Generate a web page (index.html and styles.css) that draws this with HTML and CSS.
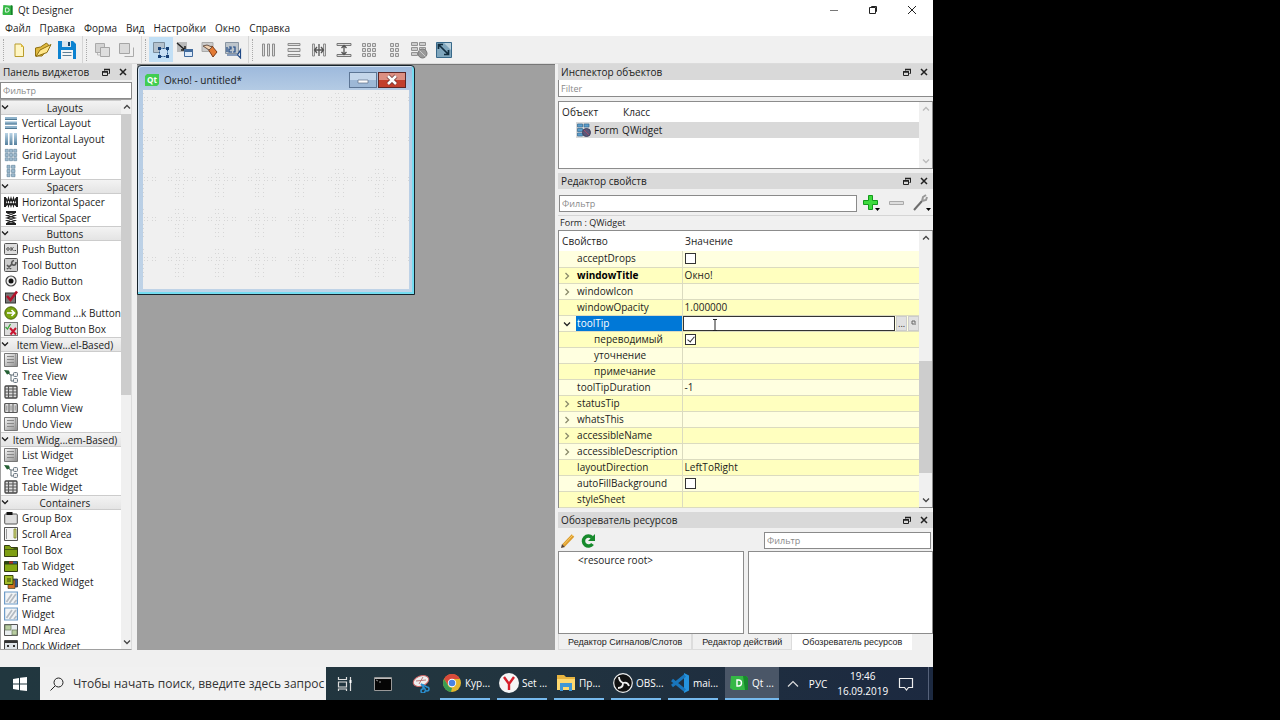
FILE: index.html
```html
<!DOCTYPE html>
<html lang="ru">
<head>
  <meta charset="UTF-8">
  <meta name="viewport" content="width=device-width, initial-scale=1.0">
  <title>Qt Designer</title>
  <link rel="stylesheet" href="styles.css">
</head>
<body>
  <svg class="sprite" aria-hidden="true">
    <defs>
      <linearGradient id="steel" x1="0" y1="0" x2="0" y2="1"><stop offset="0" stop-color="#b9d4e6"/><stop offset="1" stop-color="#55809d"/></linearGradient>
      <linearGradient id="grey" x1="0" y1="0" x2="1" y2="1"><stop offset="0" stop-color="#fafafa"/><stop offset="1" stop-color="#8c8c8c"/></linearGradient>
    </defs>
    <symbol id="i-vlayout" viewBox="0 0 14 14"><path fill="#8fb3cb" d="M1 1h12v3H1zM1 5.500h12v3H1zM1 10h12v3H1z"/><path fill="#4f7893" d="M1 3h12v1H1zM1 7.500h12v1H1zM1 12h12v1H1z"/></symbol>
    <symbol id="i-hlayout" viewBox="0 0 14 14"><path fill="url(#steel)" d="M1 1h3v12H1zM5.500 1h3v12h-3zM10 1h3v12h-3z"/></symbol>
    <symbol id="i-grid" viewBox="0 0 14 14"><path fill="#9dbace" stroke="#5c8099" stroke-width=".6" d="M1.300 1.300h3v3h-3zM5.500 1.300h3v3h-3zM9.700 1.300h3v3h-3zM1.300 5.500h3v3h-3zM5.500 5.500h3v3h-3zM9.700 5.500h3v3h-3zM1.300 9.700h3v3h-3zM5.500 9.700h3v3h-3zM9.700 9.700h3v3h-3z"/></symbol>
    <symbol id="i-form" viewBox="0 0 14 14"><path fill="#9dbace" stroke="#5c8099" stroke-width=".6" d="M3 1.300h3v3H3zM7.500 1.300h3.500v3H7.500zM3 5.500h3v3H3zM7.500 5.500h3.500v3H7.500zM3 9.700h3v3H3zM7.500 9.700h3.500v3H7.500z"/></symbol>
    <symbol id="i-hspacer" viewBox="0 0 14 14"><path fill="#222" d="M0 2h2v10H0zM12 2h2v10h-2z"/><path fill="none" stroke="#222" stroke-width="1.200" d="M2 3l2.500 8L7 3l2.500 8L12 3M2 11l2.500-8L7 11l2.500-8L12 11"/></symbol>
    <symbol id="i-vspacer" viewBox="0 0 14 14"><path fill="#222" d="M2 0h10v2H2zM2 12h10v2H2z"/><path fill="none" stroke="#222" stroke-width="1.200" d="M3 2l8 2.500L3 7l8 2.500L3 12M11 2L3 4.500 11 7 3 9.500 11 12"/></symbol>
    <symbol id="i-push" viewBox="0 0 14 14"><rect x=".5" y="1.500" width="13" height="11" rx="1" fill="#ddd" stroke="#555"/><circle cx="4" cy="7" r="1.300" fill="none" stroke="#333" stroke-width=".8"/><path fill="none" stroke="#333" stroke-width=".9" d="M7 5v4M9.500 5.500l-2 1.500 2 1.500M10.500 8.500h1.500"/></symbol>
    <symbol id="i-tool" viewBox="0 0 14 14"><rect x=".5" y=".5" width="13" height="13" rx="1" fill="#ccc" stroke="#555"/><path fill="none" stroke="#555" stroke-width="1.700" d="M3 11l5-5M10 2.500C7 3 7 6.500 9 7s3-.5 3-3M3 7l4 4"/></symbol>
    <symbol id="i-radio" viewBox="0 0 14 14"><circle cx="7" cy="7" r="5" fill="#eee" stroke="#444" stroke-width="1.200"/><circle cx="7" cy="7" r="2.500" fill="#111"/></symbol>
    <symbol id="i-check" viewBox="0 0 14 14"><rect x="1.500" y="3" width="10" height="10" fill="#777" stroke="#333"/><path fill="none" stroke="#b3122a" stroke-width="2.600" d="M3 6l3.500 4L13 1.500"/></symbol>
    <symbol id="i-command" viewBox="0 0 14 14"><circle cx="7" cy="7" r="6.200" fill="#7aa40f" stroke="#49650a"/><path fill="none" stroke="#fff" stroke-width="1.600" d="M3 7h7M7.500 4l3 3-3 3"/></symbol>
    <symbol id="i-dialog" viewBox="0 0 14 14"><rect x=".5" y=".5" width="13" height="13" fill="#ddd" stroke="#777"/><path fill="none" stroke="#38a53a" stroke-width="1.300" d="M1.500 5l2 2 3-5"/><path stroke="#c81530" stroke-width="2" d="M6 6l6 6.500M12 6l-5.500 6.500"/></symbol>
    <symbol id="i-list" viewBox="0 0 14 14"><path fill="url(#grey)" stroke="#777" d="M.5 .5h13v13H.5z"/><path stroke="#888" d="M3 3.500h7M3 6.500h7M3 9.500h7"/><path stroke="#999" d="M11.500 1v12"/></symbol>
    <symbol id="i-tree" viewBox="0 0 14 14"><path fill="#245f33" d="M0 1l5 .5 1 3-3 1z"/><path fill="none" stroke="#5d6b72" d="M5 5l2 1v6h2M7 6h2"/><rect x="9.500" y="3.500" width="4" height="4" rx="1" fill="#eee" stroke="#6a7884"/><rect x="9.500" y="9.500" width="4" height="4" rx="1" fill="#eee" stroke="#6a7884"/></symbol>
    <symbol id="i-table" viewBox="0 0 14 14"><rect x="1" y="1" width="12" height="12" rx="1" fill="#ddd" stroke="#444" stroke-width="1.300"/><path stroke="#555" stroke-width="1.100" d="M4.500 1v12M9 1v12M1 4h12M1 7h12M1 10h12"/></symbol>
    <symbol id="i-column" viewBox="0 0 14 14"><rect x=".7" y="2.500" width="12.600" height="9" rx="1" fill="#ddd" stroke="#555" stroke-width="1.200"/><path stroke="#555" d="M5 3v8M9 3v8"/><path stroke="#777" stroke-width=".8" d="M2.800 4.500v5M7 4.500v5M11.200 4.500v5"/></symbol>
    <symbol id="i-group" viewBox="0 0 14 14"><rect x=".7" y="3" width="12.600" height="10" rx="1" fill="#dedede" stroke="#555"/><path fill="#111" d="M2.500 1h6v3h-6z"/></symbol>
    <symbol id="i-scroll" viewBox="0 0 14 14"><path fill="#f3f3f3" stroke="#555" d="M.5 .5h13v13H.5z"/><path fill="#999" d="M2 2h1v10H2z"/><path fill="#d5d98c" stroke="#73801c" stroke-width=".8" d="M10 2h2v9h-2z"/></symbol>
    <symbol id="i-toolbox" viewBox="0 0 14 14"><path fill="#7e9e13" stroke="#333d12" d="M.5 2.500h5l1.500 2h6.500v9H.5z"/><path fill="#445a12" d="M1 6h8l1-1h3v2H1z"/></symbol>
    <symbol id="i-tab" viewBox="0 0 14 14"><path fill="#86a815" stroke="#303a0d" d="M.5 2.500h13v10H.5z"/><path fill="#2d4517" d="M1 2h12v3.500H1z"/><path fill="#b92c26" d="M5 2.500h4v2H5z"/><path fill="#335fa0" d="M9 2.500h4v2H9z"/></symbol>
    <symbol id="i-stack" viewBox="0 0 14 14"><path fill="#35579f" stroke="#222" stroke-width=".7" d="M6 4h7.500v8H6z"/><path fill="#cf6c22" stroke="#442" stroke-width=".7" d="M4 5h7v8.500H4z"/><path fill="#a3bd29" stroke="#374608" d="M.5 .5h8.500v9H.5z"/><path stroke="#374608" d="M3 4h4M3 6h4"/></symbol>
    <symbol id="i-frame" viewBox="0 0 14 14"><path fill="#f2f4f6" stroke="#6d9bc8" stroke-width="1.200" d="M.6 1h12.800v12H.6z"/><path stroke="#b4bbc2" stroke-width="1.800" d="M2.500 11L8 3M5.500 12L12 3M10 12l2.500-3"/></symbol>
    <symbol id="i-mdi" viewBox="0 0 14 14"><path fill="#e9eef0" stroke="#555" d="M.5 1.500h13v11H.5z"/><path fill="#b8cda0" stroke="#718067" stroke-width=".8" d="M1 2h6v5H1zM8 7h5v5H8z"/></symbol>
    <symbol id="i-dock" viewBox="0 0 14 14"><path fill="#dfe4e8" stroke="#444" d="M.5 1.500h13v12H.5z"/><path fill="#333" d="M1 2h12v2H1zM3 6h2v2H3zM9 6h2v2H9z"/></symbol>
    <symbol id="i-chev" viewBox="0 0 8 8"><path fill="none" stroke="currentColor" stroke-width="1.300" d="M1 2.500l3 3 3-3"/></symbol>
    <symbol id="i-float" viewBox="0 0 8 8"><path fill="none" stroke="#222" d="M2.500 2.500v-1h5v4h-1M.5 3.500h5v4h-5z"/><path stroke="#222" stroke-width="1.500" d="M2 1.500h6M0 4h6"/></symbol>
    <symbol id="i-close" viewBox="0 0 8 8"><path stroke="#222" stroke-width="1.500" d="M1 1l6 6M7 1L1 7"/></symbol>
  </svg>

  <div class="desktop">
    <header class="titlebar">
      <svg class="app-icon" viewBox="0 0 12 12"><path fill="#35b845" d="M1 0l11 1v11H1L0 11z"/><path fill="#16802a" d="M10 0l2 1v11h-2z"/><path fill="none" stroke="#fff" d="M3.500 3.500h2a2.500 2.500 0 010 5h-2z"/></svg>
      <span>Qt Designer</span>
      <div class="window-buttons">
        <button aria-label="Свернуть"><svg viewBox="0 0 10 10"><path stroke="#777" d="M1 5.500h8"/></svg></button>
        <button aria-label="Развернуть"><svg viewBox="0 0 10 10"><path fill="none" stroke="#222" d="M3.500 2.500v-1h5v5h-1M1.500 2.500h6v6h-6z"/></svg></button>
        <button aria-label="Закрыть"><svg viewBox="0 0 10 10"><path stroke="#222" d="M1 1l8 8M9 1L1 9"/></svg></button>
      </div>
    </header>

    <nav class="menubar">
      <a href="#">Файл</a><a href="#">Правка</a><a href="#">Форма</a><a href="#">Вид</a><a href="#">Настройки</a><a href="#">Окно</a><a href="#">Справка</a>
    </nav>

    <div class="toolbar">
      <div class="tool-group">
        <button aria-label="Новая"><svg viewBox="0 0 18 18"><path fill="#fff6c4" stroke="#b99c2c" d="M5 3h6l2.500 3v9.500H5z"/><path fill="#e1bf43" d="M11 3v3h3z"/></svg></button>
        <button aria-label="Открыть"><svg viewBox="0 0 18 18"><path fill="#e0b93f" stroke="#8f7011" d="M1.500 15V7l5-1 6-4 2 2v3L8 15z"/><path fill="#ffe68b" stroke="#8f7011" d="M2 15.500L6 9l11-5.500-4 8z"/></svg></button>
        <button aria-label="Сохранить"><svg viewBox="0 0 18 18"><path fill="#0d83d1" d="M0 0h15l3 3v15H0z"/><path fill="#d8e5ee" d="M4 0h9v6H4z"/><path fill="#1a4568" d="M10 1h2v4h-2z"/><path fill="#f5f5f5" d="M3 9h12v9H3z"/><path stroke="#5f7f95" d="M4.500 11.500h9M4.500 14.500h9"/></svg></button>
      </div>
      <div class="tool-group">
        <button aria-label="На задний план"><svg viewBox="0 0 18 18"><path fill="#d3d3d3" stroke="#aaa" d="M2.500 2.500h9v9h-9z"/><path fill="#dedede" stroke="#a5a5a5" d="M7.500 6.500h9v9h-9z"/><path fill="none" stroke="#bbb" d="M4.500 12v2h3"/></svg></button>
        <button aria-label="На передний план"><svg viewBox="0 0 18 18"><path fill="none" stroke="#aaa" d="M7.500 15.500h9v-9"/><path fill="#dadada" stroke="#a5a5a5" d="M2.500 2.500h10v10h-10z"/></svg></button>
      </div>
      <div class="tool-group">
        <button class="active" aria-label="Изменение виджетов"><svg viewBox="0 0 18 18"><path fill="#b5c2cd" stroke="#7b8c9a" d="M1.500 1.500h11v10h-11z"/><path fill="#c7dff4" stroke="#24548b" stroke-dasharray="2 1" d="M7.500 7.500h8v8h-8z"/><path fill="#173f75" d="M6 6h3v3H6zM14 6h3v3h-3zM6 14h3v3H6zM14 14h3v3h-3z"/></svg></button>
        <button aria-label="Сигналы и слоты"><svg viewBox="0 0 18 18"><path fill="#bbb" d="M1 1h10v10H1z"/><path fill="none" stroke="#222" stroke-width="1.500" d="M1 2l8 7M9 5v4H5"/><path fill="#dceafa" stroke="#426b9d" d="M8.500 8.500h8v7h-8z"/><path fill="#426b9d" d="M8 8h9v3H8z"/></svg></button>
        <button aria-label="Партнёры"><svg viewBox="0 0 18 18"><path fill="#ccc" stroke="#aaa" d="M2 1.500h11v9H2z"/><path fill="#e37b35" stroke="#7d3b18" d="M8 8l4-3 5 6-4 5z"/><path fill="#f0d0b0" stroke="#6b5548" d="M3 5l4-1 5 2-3 3z"/></svg></button>
        <button aria-label="Порядок обхода"><svg viewBox="0 0 18 18"><path fill="#bdc5cc" stroke="#8995a2" d="M1.500 1.500h13v11h-13z"/><path fill="none" stroke="#214a87" stroke-width="1.200" d="M3 6v5M5 6h2v2H5v3h3M9 6h2v5H9M13 14H3M16.500 9v8l-3-3z"/></svg></button>
      </div>
      <div class="tool-group layouts">
        <button aria-label="По горизонтали"><svg viewBox="0 0 18 18"><path fill="#ddd" stroke="#8c8c8c" d="M2.500 3v12h2V3zM7.500 3v12h2V3zM12.500 3v12h2V3z"/></svg></button>
        <button aria-label="По вертикали"><svg viewBox="0 0 18 18"><path fill="#ddd" stroke="#8c8c8c" d="M3 2.500h12v2H3zM3 7.500h12v3H3zM3 13.500h12v2H3z"/></svg></button>
        <button aria-label="Разделитель по горизонтали"><svg viewBox="0 0 18 18"><path fill="#ddd" stroke="#8c8c8c" d="M2.500 3v12h2V3zM13.500 3v12h2V3z"/><path fill="none" stroke="#555" stroke-width="1.300" d="M9 3v12M4 9h10M7 6L4.500 9 7 12M11 6l2.500 3-2.500 3"/></svg></button>
        <button aria-label="Разделитель по вертикали"><svg viewBox="0 0 18 18"><path fill="#ddd" stroke="#777" d="M2 2.500h14v2H2zM2 13.500h14v2H2z"/><path fill="none" stroke="#555" stroke-width="1.300" d="M9 5v8M6.500 7L9 4.500 11.500 7M6.500 11L9 13.500l2.500-2.500"/></svg></button>
        <button aria-label="По сетке"><svg viewBox="0 0 18 18"><path fill="#ddd" stroke="#929292" d="M2.500 2.500h3v3h-3zM7.500 2.500h3v3h-3zM12.500 2.500h3v3h-3zM2.500 7.500h3v3h-3zM7.500 7.500h3v3h-3zM12.500 7.500h3v3h-3zM2.500 12.500h3v3h-3zM7.500 12.500h3v3h-3zM12.500 12.500h3v3h-3z"/></svg></button>
        <button aria-label="По форме"><svg viewBox="0 0 18 18"><path fill="#ddd" stroke="#929292" d="M5.500 2.500h3v3h-3zM10.500 2.500h3v3h-3zM5.500 7.500h3v3h-3zM10.500 7.500h3v3h-3zM5.500 12.500h3v3h-3zM10.500 12.500h3v3h-3z"/></svg></button>
        <button aria-label="Убрать компоновку"><svg viewBox="0 0 18 18"><path fill="#ccc" stroke="#929292" d="M1.500 1.500h6v3h-6zM9.500 1.500h6v3h-6zM1.500 6.500h6v3h-6zM9.500 6.500h6v3h-6zM1.500 11.500h6v3h-6z"/><circle cx="12.500" cy="12.500" r="4.500" fill="#999" stroke="#777"/><path stroke="#ccc" d="M9.500 9.500l6 6"/></svg></button>
        <button aria-label="Подогнать размер"><svg viewBox="0 0 18 18"><path fill="#7fa6bd" stroke="#38698a" d="M1.500 1.500h15v15h-15z"/><path fill="#b9d0dc" d="M9 2h7v7z"/><path fill="none" stroke="#102c3e" stroke-width="1.700" d="M4 4l9 9M3.500 8V3.500H8M13.500 9v4.500H9"/></svg></button>
      </div>
    </div>

    <main class="workspace">
      <aside class="widget-box">
        <div class="dock-title">Панель виджетов<span class="dock-buttons"><button aria-label="Открепить"><svg><use href="#i-float"/></svg></button><button aria-label="Закрыть"><svg><use href="#i-close"/></svg></button></span></div>
        <input class="filter" type="text" placeholder="Фильтр" aria-label="Фильтр виджетов">
        <div class="widget-list">
          <div class="widget-items">
            <h3><svg><use href="#i-chev"/></svg>Layouts</h3>
            <ul>
              <li><svg><use href="#i-vlayout"/></svg>Vertical Layout</li>
              <li><svg><use href="#i-hlayout"/></svg>Horizontal Layout</li>
              <li><svg><use href="#i-grid"/></svg>Grid Layout</li>
              <li><svg><use href="#i-form"/></svg>Form Layout</li>
            </ul>
            <h3><svg><use href="#i-chev"/></svg>Spacers</h3>
            <ul>
              <li><svg><use href="#i-hspacer"/></svg>Horizontal Spacer</li>
              <li><svg><use href="#i-vspacer"/></svg>Vertical Spacer</li>
            </ul>
            <h3><svg><use href="#i-chev"/></svg>Buttons</h3>
            <ul>
              <li><svg><use href="#i-push"/></svg>Push Button</li>
              <li><svg><use href="#i-tool"/></svg>Tool Button</li>
              <li><svg><use href="#i-radio"/></svg>Radio Button</li>
              <li><svg><use href="#i-check"/></svg>Check Box</li>
              <li><svg><use href="#i-command"/></svg>Command ...k Button</li>
              <li><svg><use href="#i-dialog"/></svg>Dialog Button Box</li>
            </ul>
            <h3><svg><use href="#i-chev"/></svg>Item View...el-Based)</h3>
            <ul>
              <li><svg><use href="#i-list"/></svg>List View</li>
              <li><svg><use href="#i-tree"/></svg>Tree View</li>
              <li><svg><use href="#i-table"/></svg>Table View</li>
              <li><svg><use href="#i-column"/></svg>Column View</li>
              <li><svg><use href="#i-list"/></svg>Undo View</li>
            </ul>
            <h3><svg><use href="#i-chev"/></svg>Item Widg...em-Based)</h3>
            <ul>
              <li><svg><use href="#i-list"/></svg>List Widget</li>
              <li><svg><use href="#i-tree"/></svg>Tree Widget</li>
              <li><svg><use href="#i-table"/></svg>Table Widget</li>
            </ul>
            <h3><svg><use href="#i-chev"/></svg>Containers</h3>
            <ul>
              <li><svg><use href="#i-group"/></svg>Group Box</li>
              <li><svg><use href="#i-scroll"/></svg>Scroll Area</li>
              <li><svg><use href="#i-toolbox"/></svg>Tool Box</li>
              <li><svg><use href="#i-tab"/></svg>Tab Widget</li>
              <li><svg><use href="#i-stack"/></svg>Stacked Widget</li>
              <li><svg><use href="#i-frame"/></svg>Frame</li>
              <li><svg><use href="#i-frame"/></svg>Widget</li>
              <li><svg><use href="#i-mdi"/></svg>MDI Area</li>
              <li><svg><use href="#i-dock"/></svg>Dock Widget</li>
            </ul>
          </div>
          <div class="scrollbar thumb-top">
            <svg class="up"><use href="#i-chev"/></svg><div class="track"><div class="thumb"></div></div><svg><use href="#i-chev"/></svg>
          </div>
        </div>
      </aside>

      <section class="mdi">
        <div class="form-window">
          <div class="form-title">
            <svg class="qt-icon" viewBox="0 0 14 12"><path fill="#41cd52" d="M2 0h12v10l-2 2H0V2z"/><text x="7" y="9" text-anchor="middle" class="qt-text">Qt</text></svg>
            <span>Окно! - untitled*</span>
            <button class="form-min" aria-label="Свернуть форму"><svg viewBox="0 0 26 14"><path fill="#fff" stroke="#5d6f87" stroke-width=".7" d="M8 7h10v3H8z"/></svg></button>
            <button class="form-close" aria-label="Закрыть форму"><svg viewBox="0 0 26 14"><path stroke="#6b3030" stroke-width="4" d="M9 3l8 8M17 3l-8 8"/><path stroke="#fff" stroke-width="2.600" d="M9 3l8 8M17 3l-8 8"/></svg></button>
          </div>
          <div class="form-canvas">
            <svg width="100%" height="100%">
              <pattern id="dots" width="40" height="40" patternUnits="userSpaceOnUse" patternTransform="translate(17 -10)">
                <path stroke="#d6d6d6" stroke-dasharray="1 2 1 4" d="M8 17.500h28M8 20.500h28M15 9.500h11M15 13.500h11M15 24.500h11M15 28.500h11M15 32.500h11M15 36.500h11"/>
              </pattern>
              <rect width="100%" height="100%" fill="url(#dots)"/>
            </svg>
          </div>
        </div>
      </section>

      <aside class="docks">
        <section class="dock inspector">
          <div class="dock-title">Инспектор объектов<span class="dock-buttons"><button aria-label="Открепить"><svg><use href="#i-float"/></svg></button><button aria-label="Закрыть"><svg><use href="#i-close"/></svg></button></span></div>
          <input class="filter flat" type="text" placeholder="Filter" aria-label="Фильтр объектов">
          <div class="view">
            <table class="objects">
              <thead><tr><th>Объект</th><th>Класс</th></tr></thead>
              <tbody><tr><td><svg class="obj-icon" viewBox="0 0 14 14"><path fill="#5b9dcc" stroke="#33698f" stroke-width=".7" d="M.5 1h5v3h-5zM7 1h5v3H7zM.5 5.500h5v3h-5zM.5 10h5v3h-5z"/><circle cx="9.500" cy="9.500" r="4" fill="#5b5779" stroke="#40415f"/><path stroke="#a44a68" d="M7 7l5 5"/></svg>Form</td><td>QWidget</td></tr></tbody>
            </table>
            <div class="scrollbar disabled">
              <svg class="up"><use href="#i-chev"/></svg><div class="track"></div><svg><use href="#i-chev"/></svg>
            </div>
          </div>
        </section>

        <section class="dock properties">
          <div class="dock-title">Редактор свойств<span class="dock-buttons"><button aria-label="Открепить"><svg><use href="#i-float"/></svg></button><button aria-label="Закрыть"><svg><use href="#i-close"/></svg></button></span></div>
          <div class="prop-tools">
            <input class="filter" type="text" placeholder="Фильтр" aria-label="Фильтр свойств">
            <button aria-label="Добавить"><svg viewBox="0 0 20 18"><path fill="#3ddb3d" stroke="#129a1b" d="M6.500 1.500h4v5h5v4h-5v5h-4v-5h-5v-4h5z"/><path d="M13 14h5l-2.500 3z"/></svg></button>
            <button aria-label="Удалить"><svg viewBox="0 0 20 18"><path fill="#ddd" stroke="#aaa" d="M2.500 7.500h14v3h-14z"/></svg></button>
            <button aria-label="Настроить"><svg viewBox="0 0 20 18"><path stroke="#6d6d6d" stroke-width="2" d="M2 16l8-9"/><path fill="none" stroke="#999" stroke-width="2" d="M10 7l1-4 3-2M10 7l4-1 1-3"/><path d="M14 14h5l-2.500 3z"/></svg></button>
          </div>
          <div class="prop-path">Form : QWidget</div>
          <div class="view">
            <table class="props">
              <thead><tr><th>Свойство</th><th>Значение</th></tr></thead>
              <tbody>
                <tr><td><label for="accept-drops">acceptDrops</label></td><td><input type="checkbox" id="accept-drops"></td></tr>
                <tr><td class="changed"><svg class="closed"><use href="#i-chev"/></svg>windowTitle</td><td>Окно!</td></tr>
                <tr><td><svg class="closed"><use href="#i-chev"/></svg>windowIcon</td><td></td></tr>
                <tr><td>windowOpacity</td><td>1.000000</td></tr>
                <tr class="selected"><td><svg><use href="#i-chev"/></svg><label for="tooltip">toolTip</label></td><td><div class="editor"><input type="text" id="tooltip"><button>...</button><button aria-label="Сбросить"><svg viewBox="0 0 8 8"><path fill="none" stroke="#666" d="M2 2v3h2M2 2h3v4"/></svg></button></div></td></tr>
                <tr><td class="sub"><label for="translatable">переводимый</label></td><td><input type="checkbox" id="translatable" checked></td></tr>
                <tr><td class="sub">уточнение</td><td></td></tr>
                <tr><td class="sub">примечание</td><td></td></tr>
                <tr><td>toolTipDuration</td><td>-1</td></tr>
                <tr><td><svg class="closed"><use href="#i-chev"/></svg>statusTip</td><td></td></tr>
                <tr><td><svg class="closed"><use href="#i-chev"/></svg>whatsThis</td><td></td></tr>
                <tr><td><svg class="closed"><use href="#i-chev"/></svg>accessibleName</td><td></td></tr>
                <tr><td><svg class="closed"><use href="#i-chev"/></svg>accessibleDescription</td><td></td></tr>
                <tr><td>layoutDirection</td><td>LeftToRight</td></tr>
                <tr><td><label for="auto-fill">autoFillBackground</label></td><td><input type="checkbox" id="auto-fill"></td></tr>
                <tr><td>styleSheet</td><td></td></tr>
              </tbody>
            </table>
            <div class="scrollbar thumb-bottom">
              <svg class="up"><use href="#i-chev"/></svg><div class="track"><div class="thumb"></div></div><svg><use href="#i-chev"/></svg>
            </div>
            <svg class="cursor" viewBox="0 0 6 12"><path fill="none" stroke="#222" d="M1 .5h4M3 0v12M1 11.500h4"/></svg>
          </div>
        </section>

        <section class="dock resources">
          <div class="dock-title">Обозреватель ресурсов<span class="dock-buttons"><button aria-label="Открепить"><svg><use href="#i-float"/></svg></button><button aria-label="Закрыть"><svg><use href="#i-close"/></svg></button></span></div>
          <div class="res-tools">
            <button aria-label="Изменить"><svg viewBox="0 0 16 16"><path stroke="#dc9b2b" stroke-width="3.500" d="M3.500 12.500L13 2.500"/><path stroke="#f8cf6b" d="M4 11.500L13 2"/><path fill="#554030" d="M1 15l1-4 3 3z"/></svg></button>
            <button aria-label="Обновить"><svg viewBox="0 0 16 16"><path fill="none" stroke="#178a2c" stroke-width="3.500" d="M12 4.500A5 5 0 1 0 12.500 11"/><path fill="#178a2c" d="M8 8h7V1z"/></svg></button>
            <input class="filter" type="text" placeholder="Фильтр" aria-label="Фильтр ресурсов">
          </div>
          <div class="res-views">
            <div class="res-tree">&lt;resource root&gt;</div>
            <div class="res-files"></div>
          </div>
          <div class="tabs">
            <button>Редактор Сигналов/Слотов</button><button>Редактор действий</button><button class="current">Обозреватель ресурсов</button>
          </div>
        </section>
      </aside>
    </main>

    <div class="statusbar"></div>

    <footer class="taskbar">
      <button class="start" aria-label="Пуск"><svg viewBox="0 0 14 14"><path fill="#fff" d="M0 2l6-1v5.500H0zM7 .8L14 0v6.500H7zM0 7.500h6V13l-6-1zM7 7.500h7V14l-7-.8z"/></svg></button>
      <label class="search">
        <svg viewBox="0 0 14 14"><circle cx="8.500" cy="5.500" r="4.500" fill="none" stroke="#222"/><path stroke="#222" d="M5 9L.5 13.500"/></svg>
        <input type="text" placeholder="Чтобы начать поиск, введите здесь запрос" aria-label="Поиск">
      </label>
      <button class="pin" aria-label="Представление задач"><svg viewBox="0 0 18 18"><path fill="none" stroke="#ddd" stroke-width="1.200" d="M2.500 2v2.500h8V2M2.500 7h8v5h-8zM2.500 16v-2h8v2M14.500 2v14"/><path stroke="#fff" stroke-width="2" d="M14.500 5v3"/></svg></button>
      <button class="pin" aria-label="Командная строка"><svg viewBox="0 0 18 18"><path fill="#050505" stroke="#999" d="M.5 2.500h17v13H.5z"/><path stroke="#bbb" d="M1 3.500h16"/><path stroke="#ccc" stroke-width=".7" d="M2 5l2 1M5 7h2"/></svg></button>
      <button class="pin" aria-label="Ножницы"><svg viewBox="0 0 18 18"><ellipse cx="9" cy="6" rx="8" ry="5" fill="#eee" stroke="#c66" transform="rotate(-20 9 6)"/><path stroke="#b77" d="M4 6l10-1M7 9l4-7"/><path fill="none" stroke="#2a8fd0" stroke-width="1.500" d="M9 9l6 3a2 2 0 11-2 2zM11 9v5a2 2 0 102 2"/></svg></button>
      <button class="app"><svg viewBox="0 0 20 20"><circle cx="10" cy="10" r="9" fill="#e3b62c"/><path fill="#d94a3b" d="M2 6a9 9 0 0116 0h-8l-4 6z"/><path fill="#3a9b52" d="M2 6l5 8 3 1-1 4A9 9 0 012 6z"/><circle cx="10" cy="10" r="4.200" fill="#fff"/><circle cx="10" cy="10" r="3.300" fill="#4b83e2"/></svg>Кур...</button>
      <button class="app"><svg viewBox="0 0 20 20"><circle cx="10" cy="10" r="10" fill="#f6f6f6"/><path fill="none" stroke="#d61f2b" stroke-width="2.400" d="M5 4l5 7 5-7M10 10v7"/></svg>Set ...</button>
      <button class="app"><svg viewBox="0 0 20 20"><path fill="#e8b540" d="M1 2h7l2 2h9v13H1z"/><path fill="#ffd970" d="M1 6h18v11H1z"/><path fill="#4197d5" d="M4 10h12v8h-3v-4H7v4H4z"/></svg>Пр...</button>
      <button class="app"><svg viewBox="0 0 20 20"><circle cx="10" cy="10" r="9.300" fill="#111" stroke="#eee" stroke-width="1.200"/><path fill="none" stroke="#eee" stroke-width="1.800" d="M6 4c0 4 2 5 4 6 3-1 5 0 6 3M10 10c0 3-2 5-5 5"/></svg>OBS...</button>
      <button class="app"><svg viewBox="0 0 20 20"><path fill="#2593de" d="M14 0l5 2.500v15L14 20z"/><path fill="none" stroke="#1976bd" stroke-width="3" d="M15 2.500L2 13M15 17.500L2 7"/></svg>mai...</button>
      <button class="app current"><svg viewBox="0 0 20 20"><path fill="#35b845" d="M2 3h15l2 2v12H4l-3-2z"/><path fill="#178a2c" d="M14 3h3l2 2v12h-3z"/><path fill="none" stroke="#fff" stroke-width="1.400" d="M8 7h1.500a2.500 2.500 0 010 6H8z"/></svg>Qt ...</button>
      <div class="tray">
        <svg viewBox="0 0 12 12"><path fill="none" stroke="#ddd" stroke-width="1.200" d="M1 8.500l5-5 5 5"/></svg>
        <span>РУС</span>
        <time datetime="2019-09-16T19:46">19:46<br>16.09.2019</time>
        <svg class="notify" viewBox="0 0 16 16"><path fill="none" stroke="#eee" stroke-width="1.200" d="M1.500 2.500h13v9h-4L8.500 14l-2-2.500h-5z"/></svg>
      </div>
    </footer>
  </div>
</body>
</html>
```
FILE: styles.css
```css
* {
  box-sizing: border-box;
}

body {
  margin: 0;
  background: #000;
  color: #1c1c1c;
  font-family: "Open Sans", "Noto Sans", sans-serif;
  font-size: 10px;
  line-height: 16px;
}

button, input {
  font: inherit;
  color: inherit;
}

button {
  display: flex;
  align-items: center;
  justify-content: center;
  padding: 0;
  border: 0;
  background: none;
}

svg {
  display: block;
  flex: none;
}

.sprite {
  position: absolute;
  width: 0;
  height: 0;
}

.desktop {
  display: flex;
  flex-direction: column;
  width: 72.9%;
  min-height: calc(100vh - 20px);
  background: #f0f0f0;
}

/* title and menu */
.titlebar {
  display: flex;
  align-items: center;
  gap: 5px;
  height: 20px;
  padding-left: 2px;
  background: #fff;
  font-size: 10px;
}

.app-icon {
  width: 11px;
  height: 10px;
}

.window-buttons {
  display: flex;
  margin-left: auto;
  padding-right: 2px;
}

.window-buttons button {
  width: 39px;
  height: 20px;
}

.window-buttons svg {
  width: 10px;
  height: 10px;
}

.menubar {
  display: flex;
  gap: 9px;
  height: 16px;
  padding-left: 5px;
  background: #fff;
}

.menubar a {
  color: inherit;
  text-decoration: none;
}

.toolbar {
  display: flex;
  height: 28px;
  border-bottom: 1px solid #dcdcdc;
}

.tool-group {
  display: flex;
  align-items: center;
  padding: 0 3px;
  border-right: 1px solid #d5d5d5;
}

.tool-group::before {
  content: "";
  height: 22px;
  border-left: 1px dotted #aaa;
  margin-right: 3px;
}

.tool-group:last-child {
  border-right: 0;
}

.tool-group button {
  width: 24px;
  height: 25px;
}

.tool-group svg {
  width: 18px;
  height: 18px;
}

.tool-group .active {
  background: #c2dff5;
}

.tool-group.layouts button {
  width: 25px;
}

/* workspace */
.workspace {
  display: flex;
  flex: 1;
  min-height: 0;
}

.dock-title {
  display: flex;
  align-items: center;
  height: 16px;
  padding-left: 3px;
  background: #d9d9d9;
}

.dock-buttons {
  display: flex;
  gap: 9px;
  margin-left: auto;
  padding-right: 5px;
}

.dock-buttons svg {
  width: 8px;
  height: 8px;
}

.filter {
  display: block;
  width: 100%;
  height: 17px;
  padding: 0 2px;
  border: 1px solid #8a8a8a;
  background: #fff;
  font-size: 9px;
}

.filter::placeholder {
  color: #8a8a8a;
}

.widget-box {
  display: flex;
  flex-direction: column;
  flex: none;
  width: 132px;
  margin-right: 5px;
}

.widget-box .filter {
  margin-top: 2px;
}

.widget-list {
  display: flex;
  flex: 1 0 0;
  min-height: 0;
  overflow: hidden;
  border: 1px solid #a0a0a0;
  border-right-color: #dcdcdc;
  background: #fff;
}

.widget-items {
  flex: 1;
}

.widget-items h3 {
  position: relative;
  height: 15px;
  margin: 0;
  padding-left: 8px;
  background: linear-gradient(#f3f3f3, #e4e4e4);
  border-top: 1px solid #ccc;
  border-bottom: 1px solid #ccc;
  font-size: 10px;
  font-weight: normal;
  line-height: 14px;
  text-align: center;
  white-space: nowrap;
}

.widget-items h3 svg {
  position: absolute;
  left: 0;
  top: 2px;
  width: 8px;
  height: 8px;
}

.widget-items ul {
  margin: 0;
  padding: 0;
  list-style: none;
}

.widget-items li {
  display: flex;
  align-items: center;
  gap: 4px;
  height: 16px;
  padding-left: 3px;
  white-space: nowrap;
}

.widget-items li svg {
  width: 14px;
  height: 14px;
}

.scrollbar {
  display: flex;
  flex-direction: column;
  flex: none;
  align-items: center;
  gap: 3px;
  width: 13px;
  padding: 3px 0;
  background: #f0f0f0;
  color: #444;
}

.widget-list .scrollbar {
  width: 12px;
}

.scrollbar svg {
  width: 8px;
  height: 8px;
}

.up {
  transform: rotate(180deg);
}

.track {
  display: flex;
  flex-direction: column;
  flex: 1;
  width: 100%;
}

.thumb {
  background: #cdcdcd;
}

.thumb-top .thumb {
  height: 54%;
}

.thumb-bottom .thumb {
  height: 45%;
  margin-top: auto;
  margin-bottom: 20px;
}

.disabled {
  color: #bbb;
}

.mdi {
  position: relative;
  flex: 1;
  background: #a0a0a0;
  border-top: 1px solid #777;
}

.form-window {
  position: absolute;
  left: 0;
  top: 0;
  display: flex;
  flex-direction: column;
  width: 278px;
  height: 230px;
  padding: 0 5px 5px;
  border: 1px solid #16232b;
  border-radius: 4px 4px 0 0;
  background: linear-gradient(#9db9dc, #b4cbe4 24px, #bfd3e7);
  box-shadow: inset -2px -2px #74dcf0, inset 1px 1px #d4e4f4;
}

.form-title {
  display: flex;
  align-items: center;
  gap: 5px;
  height: 24px;
  padding: 4px 3px 0 2px;
}

.form-title span {
  margin-right: auto;
}

.qt-icon {
  width: 14px;
  height: 12px;
}

.qt-text {
  fill: #fff;
  font-size: 8px;
  font-weight: bold;
}

.form-title button {
  width: 28px;
  height: 16px;
  border: 1px solid #5c7594;
  background: linear-gradient(#c4d6ea 50%, #9db8d6 50%);
}

.form-title button svg {
  width: 26px;
  height: 14px;
}

.form-title .form-close {
  margin-left: -4px;
  border-color: #5d2626;
  background: linear-gradient(#dc8f82 50%, #c2402d 50%);
}

.form-canvas {
  flex: 1;
  min-height: 0;
  background: #f0f0f0;
}

/* right docks */
.docks {
  display: flex;
  flex-direction: column;
  flex: none;
  gap: 4px;
  width: 375px;
  margin-left: 3px;
}

.dock {
  display: flex;
  flex-direction: column;
}

.view {
  position: relative;
  display: flex;
  border: 1px solid #8c8c8c;
  background: #fff;
}

.flat {
  border-top: 0;
  border-right: 0;
}

.inspector .view {
  height: 68px;
  margin-top: 4px;
}

table {
  flex: 1;
  border-collapse: collapse;
  table-layout: fixed;
}

th, td {
  padding: 0;
  font-weight: normal;
  text-align: left;
  white-space: nowrap;
}

.objects {
  align-self: flex-start;
}

.objects th {
  height: 20px;
  padding-left: 4px;
}

.objects th:first-child {
  width: 60px;
  padding-left: 3px;
}

.objects td {
  height: 16px;
  padding-left: 3px;
  background: #d9d9d9;
}

.objects td:first-child {
  position: relative;
  padding-left: 35px;
  background: linear-gradient(90deg, #fff 17px, #d9d9d9 17px);
}

.obj-icon {
  position: absolute;
  left: 18px;
  top: 1px;
  width: 14px;
  height: 14px;
}

.prop-tools {
  display: flex;
  align-items: center;
  gap: 5px;
  height: 26px;
  padding: 2px 1px 0;
}

.prop-tools .filter {
  flex: 1;
}

.prop-tools button svg {
  width: 20px;
  height: 18px;
}

.prop-path {
  height: 15px;
  padding-left: 2px;
  border-top: 1px solid #d5d5d5;
  font-size: 9px;
  line-height: 14px;
}

.properties .view {
  height: 278px;
}

.props {
  align-self: flex-start;
}

.props th {
  height: 20px;
  padding-left: 3px;
}

.props th:first-child {
  width: 123px;
}

.props td {
  position: relative;
  height: 16px;
  padding-left: 2px;
  border-bottom: 1px solid #dbdbc0;
  line-height: 15px;
}

.props td:first-child {
  padding-left: 18px;
  border-right: 1px solid #dbdbc0;
}

.props td.sub {
  padding-left: 35px;
}

.props tbody tr {
  background: #ffffbf;
}

.props tbody tr:nth-child(odd) {
  background: #ffffe0;
}

.props .changed {
  font-weight: bold;
  color: #000;
}

.props td > svg {
  position: absolute;
  left: 4px;
  top: 4px;
  width: 8px;
  height: 8px;
  color: #222;
}

.props td > .closed {
  color: #8a8a6a;
  transform: rotate(-90deg);
}

.props .selected td:first-child {
  background: linear-gradient(90deg, #ffffe0 17px, #0078d7 17px);
  color: #fff;
}

.props .selected td:last-child {
  padding: 0;
}

input[type="checkbox"] {
  display: block;
  appearance: none;
  width: 11px;
  height: 11px;
  margin: 0;
  border: 1px solid #333;
  background: #fff;
}

input[type="checkbox"]:checked::after {
  content: "";
  display: block;
  width: 3px;
  height: 6px;
  margin-left: 3px;
  border: solid #333;
  border-width: 0 1px 1px 0;
  transform: rotate(40deg);
}

.editor {
  display: flex;
  gap: 1px;
  height: 15px;
}

.editor input {
  flex: 1;
  min-width: 0;
  padding: 0 2px;
  border: 1px solid #333;
  background: #fff;
}

.editor button {
  width: 11px;
  border: 1px solid #ccc;
  background: #e1e1e1;
  font-size: 9px;
}

.editor svg {
  width: 8px;
  height: 8px;
}

.cursor {
  position: absolute;
  left: 153px;
  top: 88px;
  width: 6px;
  height: 12px;
}

.resources {
  flex: 1;
}

.res-tools {
  display: flex;
  align-items: center;
  gap: 4px;
  height: 23px;
  padding: 2px 2px 0;
}

.res-tools svg {
  width: 16px;
  height: 16px;
}

.res-tools .filter {
  width: 167px;
  margin-left: auto;
}

.res-views {
  display: grid;
  flex: 1;
  grid-template-columns: 1fr 1fr;
  gap: 4px;
}

.res-tree,
.res-files {
  border: 1px solid #8c8c8c;
  background: #fff;
}

.res-tree {
  padding-left: 19px;
}

.tabs {
  display: flex;
  height: 16px;
}

.tabs button {
  padding: 0 9px;
  border: 1px solid #dcdcdc;
  border-top: 0;
  font-family: "Liberation Sans", sans-serif;
  font-size: 9px;
}

.tabs .current {
  border-color: #fff;
  background: #fff;
}

.statusbar {
  height: 17px;
}

/* taskbar */
.taskbar {
  display: flex;
  height: 33px;
  background: linear-gradient(90deg, #21373f, #22353f 50%, #1c2940);
  color: #fff;
}

.start {
  width: 40px;
}

.start svg {
  width: 14px;
  height: 14px;
}

.search {
  display: flex;
  align-items: center;
  gap: 9px;
  width: 286px;
  padding-left: 10px;
  background: #f1f1f1;
}

.search svg {
  width: 14px;
  height: 14px;
}

.search input {
  flex: 1;
  min-width: 0;
  padding: 0;
  border: 0;
  background: none;
  font-size: 12px;
}

.search input::placeholder {
  color: #333;
}

.pin {
  width: 38px;
}

.pin svg {
  width: 18px;
  height: 18px;
}

.app {
  justify-content: flex-start;
  gap: 3px;
  width: 50px;
  margin-right: 7px;
  padding-left: 2px;
  border-bottom: 2px solid #76b9ed;
  white-space: nowrap;
}

.app svg {
  width: 20px;
  height: 20px;
}

.app.current {
  width: 54px;
  margin-right: 0;
  padding-left: 4px;
  background: #4a5667;
}

.tray {
  display: flex;
  flex: 1;
  align-items: center;
  justify-content: space-between;
  margin-right: 4px;
  padding: 0 14px 0 8px;
  border-right: 1px solid #56627a;
}

.tray svg {
  width: 12px;
  height: 12px;
}

.tray .notify {
  width: 16px;
  height: 16px;
}

.tray time {
  line-height: 15px;
  text-align: center;
}
```
